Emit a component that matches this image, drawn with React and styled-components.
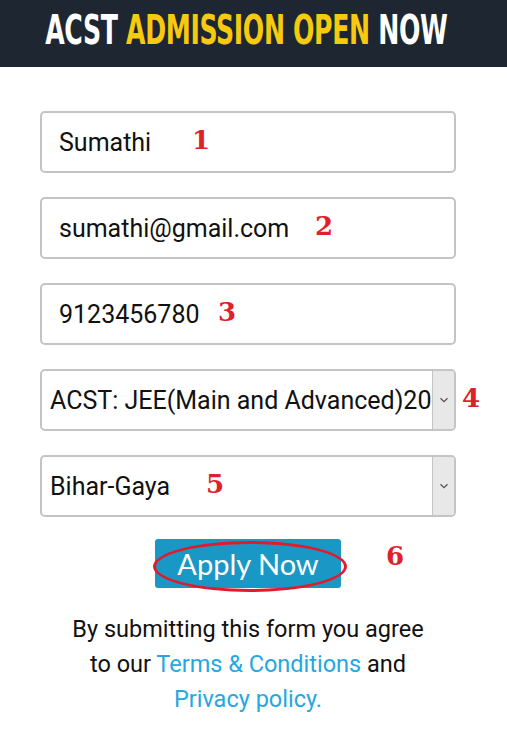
import React from "react";
import styled, { createGlobalStyle } from "styled-components";

const GlobalStyle = createGlobalStyle`
  html, body {
    margin: 0;
    padding: 0;
    background: #ffffff;
  }
  body {
    font-family: Roboto, "Liberation Sans", sans-serif;
  }
`;

const fields = [
  { value: "Sumathi", mark: "1", markLeft: 152 },
  { value: "sumathi@gmail.com", mark: "2", markLeft: 275 },
  { value: "9123456780", mark: "3", markLeft: 178 },
];

const selects = [
  { value: "ACST: JEE(Main and Advanced)2020", mark: "4", markLeft: 422 },
  { value: "Bihar-Gaya", mark: "5", markLeft: 166 },
];

const App = () => {
  return (
    <Page>
      <GlobalStyle />
      <Header>
        <HeaderTitle>
          ACST <Accent>ADMISSION OPEN</Accent> NOW
        </HeaderTitle>
      </Header>
      <Form>
        {fields.map((f) => (
          <Field key={f.mark}>
            <TextBox>{f.value}</TextBox>
            <Marker $left={f.markLeft}>{f.mark}</Marker>
          </Field>
        ))}
        {selects.map((s) => (
          <Field key={s.mark}>
            <SelectBox>
              <SelectText>{s.value}</SelectText>
              <SelectArrow>
                <svg width="10" height="6" viewBox="0 0 10 6">
                  <path d="M1.5 1.2 L5 4.6 L8.5 1.2" fill="none" stroke="#555" strokeWidth="1.3" />
                </svg>
              </SelectArrow>
            </SelectBox>
            <Marker $left={s.markLeft}>{s.mark}</Marker>
          </Field>
        ))}
        <ButtonRow>
          <ButtonWrap>
            <ApplyButton type="button">Apply Now</ApplyButton>
            <Circle />
            <Marker $left={231} $top={4}>6</Marker>
          </ButtonWrap>
        </ButtonRow>
        <Notice>
          By submitting this form you agree
          <br />
          to our <Link href="#">Terms &amp; Conditions</Link> and
          <br />
          <Link href="#">Privacy policy.</Link>
        </Notice>
      </Form>
    </Page>
  );
};

export default App;

const Page = styled.div`
  width: 507px;
  min-height: 729px;
  background: #fff;
`;

const Header = styled.header`
  height: 67px;
  background: #1e2731;
  display: flex;
  align-items: center;
  justify-content: center;
`;

const HeaderTitle = styled.h1`
  margin: 0 0 8px;
  color: #ffffff;
  font-family: "Liberation Sans Narrow", "DejaVu Sans Condensed", "Liberation Sans", sans-serif;
  font-weight: 700;
  font-size: 40px;
  letter-spacing: -0.5px;
  line-height: 1;
  white-space: nowrap;
  transform: translateX(-7px) scaleX(0.7);
`;

const Accent = styled.span`
  color: #f7c90f;
`;

const Form = styled.div`
  padding: 44px 0 0 40px;
  display: flex;
  flex-direction: column;
  gap: 24px;
`;

const Field = styled.div`
  position: relative;
  width: 416px;
`;

const TextBox = styled.div`
  box-sizing: border-box;
  height: 62px;
  border: 2px solid #c4c4c4;
  border-radius: 5px;
  padding: 0 17px;
  display: flex;
  align-items: center;
  font-family: Roboto, "Liberation Sans", sans-serif;
  font-size: 25px;
  color: #111;
`;

const SelectBox = styled.div`
  box-sizing: border-box;
  height: 62px;
  border: 2px solid #c4c4c4;
  border-radius: 5px;
  display: flex;
  overflow: hidden;
`;

const SelectText = styled.div`
  flex: 1;
  min-width: 0;
  overflow: hidden;
  white-space: nowrap;
  padding-left: 8px;
  display: flex;
  align-items: center;
  font-family: Roboto, "Liberation Sans", sans-serif;
  font-size: 25px;
  color: #111;
`;

const SelectArrow = styled.div`
  width: 21px;
  flex-shrink: 0;
  background: #e8e8e8;
  border-left: 1px solid #c4c4c4;
  display: flex;
  align-items: center;
  justify-content: center;
`;

const Marker = styled.span`
  position: absolute;
  left: ${({ $left }) => $left}px;
  top: ${({ $top }) => ($top !== undefined ? $top : 16)}px;
  font-family: "DejaVu Serif", "Liberation Serif", serif;
  font-weight: 700;
  font-size: 26px;
  line-height: 1;
  color: #e0212b;
  pointer-events: none;
`;

const ButtonRow = styled.div`
  width: 416px;
  display: flex;
  padding-left: 115px;
  box-sizing: border-box;
  margin-top: -2px;
`;

const ButtonWrap = styled.div`
  position: relative;
`;

const ApplyButton = styled.button`
  width: 186px;
  height: 49px;
  border: none;
  border-radius: 3px;
  background: #1a98c5;
  color: #ffffff;
  font-family: Lato, "Open Sans", sans-serif;
  font-size: 29px;
  padding: 0;
  cursor: pointer;
`;

const Circle = styled.div`
  position: absolute;
  left: -2px;
  top: 2px;
  width: 194px;
  height: 51px;
  box-sizing: border-box;
  border: 3px solid #e11b2c;
  border-radius: 50%;
  pointer-events: none;
`;

const Notice = styled.p`
  width: 416px;
  margin: 0;
  text-align: center;
  font-family: Roboto, "Liberation Sans", sans-serif;
  font-size: 23.5px;
  line-height: 35px;
  color: #111;
`;

const Link = styled.a`
  color: #25a7e1;
  text-decoration: none;
`;
